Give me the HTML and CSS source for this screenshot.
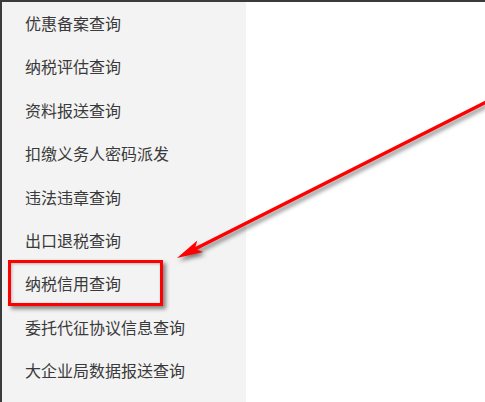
FILE: index.html
```html
<!DOCTYPE html>
<html lang="zh-CN">
<head>
<meta charset="utf-8">
<title>查询菜单</title>
<link rel="stylesheet" href="styles.css">
</head>
<body>
<div class="page">
  <nav class="sidebar">
    <ul class="menu">
      <li class="item">优惠备案查询</li>
      <li class="item">纳税评估查询</li>
      <li class="item">资料报送查询</li>
      <li class="item">扣缴义务人密码派发</li>
      <li class="item">违法违章查询</li>
      <li class="item">出口退税查询</li>
      <li class="item">纳税信用查询</li>
      <li class="item">委托代征协议信息查询</li>
      <li class="item">大企业局数据报送查询</li>
    </ul>
  </nav>
  <main class="content"></main>
  <div class="highlight-box"></div>
  <svg class="arrow" width="485" height="402" viewBox="0 0 485 402">
    <line x1="492" y1="99" x2="192" y2="250.5" stroke="#ff0000" stroke-width="3.4" stroke-linecap="butt"/>
    <polygon points="177,258 197.3,240.5 194.8,249 203.1,252.1" fill="#ff0000"/>
  </svg>
</div>
</body>
</html>
```

FILE: styles.css
```css
* { box-sizing: border-box; }
html, body {
  margin: 0;
  padding: 0;
  width: 485px;
  height: 402px;
  overflow: hidden;
  background: #ffffff;
}
.page {
  position: relative;
  display: flex;
  width: 485px;
  height: 402px;
  border-top: 2px solid #3b3b3b;
  font-family: "Noto Sans CJK SC", "Noto Sans", sans-serif;
}
.sidebar {
  width: 246px;
  flex: 0 0 246px;
  height: 100%;
  background: #f3f3f3;
  border-left: 2px solid #3b3b3b;
}
.menu {
  list-style: none;
  margin: 0;
  padding: 0;
}
.item {
  height: 43.4px;
  line-height: 43.4px;
  padding-left: 23px;
  font-size: 16px;
  color: #3a3a3a;
  white-space: nowrap;
}
.content {
  flex: 1;
  background: #ffffff;
}
.highlight-box {
  position: absolute;
  left: 8px;
  top: 258px;
  width: 155px;
  height: 46px;
  border: 3px solid #ff0000;
  box-shadow: 3px 3px 4px rgba(0, 0, 0, 0.45), inset 1px 1px 3px rgba(0, 0, 0, 0.25);
}
.arrow {
  position: absolute;
  left: 0;
  top: -2px;
  pointer-events: none;
  filter: drop-shadow(2px 3px 2px rgba(0, 0, 0, 0.5));
}
```
